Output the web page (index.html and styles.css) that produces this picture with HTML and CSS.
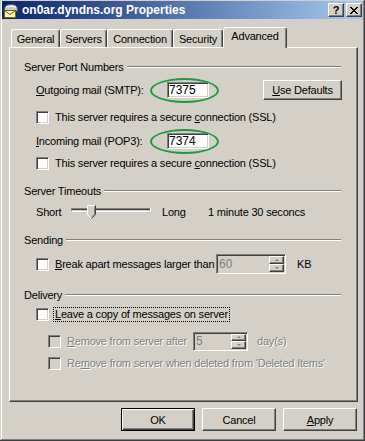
FILE: index.html
```html
<!DOCTYPE html>
<html>

<head>
  <link rel="stylesheet" href="styles.css">
</head>

<body>

  <div class="window">

    <!-- caption bar -->
    <div class="titlebar">
      <svg class="app-icon" width="16" height="16" viewBox="0 0 16 16">
        <path d="M1.5 7 Q1.5 2.5 8 2.5 Q14.5 2.5 14.5 7 L14.5 9 L1.5 9 Z" fill="#c8c8c8" stroke="#5a5a5a" />
        <path d="M3 5 Q8 3 13 5" fill="none" stroke="#ffffff" />
        <rect x="1.5" y="8.5" width="11" height="7" fill="#fff6b0" stroke="#7a6410" />
        <path d="M1.5 8.5 L7 12.5 L12.5 8.5" fill="none" stroke="#7a6410" />
      </svg>
      <span class="title">on0ar.dyndns.org Properties</span>
      <div class="caption-buttons">
        <span class="cap-btn help">?</span>
        <span class="cap-btn">
          <svg width="8" height="7" viewBox="0 0 8 7">
            <path d="M0 0 L7 7 M1 0 L8 7 M7 0 L0 7 M8 0 L1 7" stroke="#000" stroke-width="1" />
          </svg>
        </span>
      </div>
    </div>

    <!-- tab strip -->
    <div class="tabs">
      <div class="tab tab-general">General</div>
      <div class="tab tab-servers">Servers</div>
      <div class="tab tab-connection">Connection</div>
      <div class="tab tab-security">Security</div>
      <div class="tab tab-advanced selected">Advanced</div>
    </div>

    <div class="panel">

      <div class="group-title">Server Port Numbers<span class="rule"></span></div>

      <div class="row row-out">
        <span class="port-label"><u>O</u>utgoing mail (SMTP):</span>
        <span class="field">7375<span class="ring"></span></span>
        <span class="btn defaults"><u>U</u>se Defaults</span>
      </div>
      <div class="row row-ssl1">
        <span class="check"></span>
        <span>This server requires a secure <u>c</u>onnection (SSL)</span>
      </div>

      <div class="row row-in">
        <span class="port-label"><u>I</u>ncoming mail (POP3):</span>
        <span class="field">7374<span class="ring"></span></span>
      </div>
      <div class="row row-ssl2">
        <span class="check"></span>
        <span>This server requires a secure <u>c</u>onnection (SSL)</span>
      </div>

      <div class="group-title gap">Server Timeouts<span class="rule"></span></div>

      <div class="row row-slider">
        <span class="short">Short</span>
        <svg class="slider" width="80" height="20" viewBox="0 0 80 20">
          <line x1="1" y1="6.5" x2="79" y2="6.5" stroke="#808080" />
          <line x1="1" y1="7.5" x2="79" y2="7.5" stroke="#404040" />
          <line x1="1" y1="8.5" x2="79" y2="8.5" stroke="#d4d0c8" />
          <line x1="1" y1="9.5" x2="79" y2="9.5" stroke="#ffffff" />
          <line x1="79.5" y1="6" x2="79.5" y2="10" stroke="#ffffff" />
          <line x1="0.5" y1="6" x2="0.5" y2="9" stroke="#808080" />
          <path d="M16.5 3.5 L24.5 3.5 L24.5 12.5 L20.5 16.5 L16.5 12.5 Z" fill="#d4d0c8" />
          <path d="M16.5 12.5 L16.5 3.5 L24 3.5" fill="none" stroke="#ffffff" />
          <path d="M24.5 3.5 L24.5 12.5 L20.5 16.5" fill="none" stroke="#404040" />
          <path d="M23.5 4.5 L23.5 12 L20.5 15" fill="none" stroke="#808080" />
          <path d="M16.5 12.5 L20 16" fill="none" stroke="#ffffff" />
        </svg>
        <span class="long">Long</span>
        <span>1 minute 30 seconcs</span>
      </div>

      <div class="group-title sending">Sending<span class="rule"></span></div>

      <div class="row row-break">
        <span class="check"></span>
        <span class="break-label"><u>B</u>reak apart messages larger than</span>
        <span class="spin spin-kb">60
          <span class="spin-btns"><span class="spin-btn"><i class="up"></i></span><span class="spin-btn"><i class="down"></i></span></span>
        </span>
        <span class="unit-kb">KB</span>
      </div>

      <div class="group-title gap">Delivery<span class="rule"></span></div>

      <div class="row row-leave">
        <span class="check leave-check"></span>
        <span class="focus"><u>L</u>eave a copy of messages on server</span>
      </div>
      <div class="row row-after sub">
        <span class="check disabled"></span>
        <span class="dim after-label"><u>R</u>emove from server after</span>
        <span class="spin spin-days">5
          <span class="spin-btns"><span class="spin-btn"><i class="up"></i></span><span class="spin-btn"><i class="down"></i></span></span>
        </span>
        <span class="dim unit-days">day(s)</span>
      </div>
      <div class="row row-deleted sub">
        <span class="check disabled"></span>
        <span class="dim">Re<u>m</u>ove from server when deleted from 'Deleted Items'</span>
      </div>

    </div>

    <div class="dialog-buttons">
      <span class="btn default">OK</span>
      <span class="btn">Cancel</span>
      <span class="btn"><u>A</u>pply</span>
    </div>

  </div>

</body>

</html>
```

FILE: styles.css
```css
body {
  margin: 0;
  font: 11px "Liberation Sans", Arial, sans-serif;
  letter-spacing: -0.2px;
  color: #000;
}

.window {
  width: 365px;
  height: 441px;
  box-sizing: border-box;
  padding: 1px 2px 2px 2px;
  background: #d4d0c8;
  box-shadow: inset -1px -1px #404040, inset 1px 1px #d4d0c8, inset -2px -2px #808080, inset 2px 2px #fff;
}

/* caption */
.titlebar {
  display: flex;
  align-items: center;
  height: 18px;
  background: linear-gradient(to right, #0a246a, #a6caf0);
  color: #fff;
  font-weight: bold;
  font-size: 12px;
  letter-spacing: 0;
}

.app-icon {
  margin-left: 1px;
  margin-right: 3px;
  flex: none;
}

.caption-buttons {
  margin-left: auto;
  display: flex;
  gap: 2px;
  margin-right: 1px;
}

.cap-btn {
  width: 16px;
  height: 14px;
  box-sizing: border-box;
  display: flex;
  align-items: center;
  justify-content: center;
  background: #d4d0c8;
  border: 1px solid;
  border-color: #fff #404040 #404040 #fff;
  box-shadow: inset -1px -1px #808080;
  color: #000;
  font-size: 11px;
  font-weight: bold;
  line-height: 12px;
}

/* tabs */
.tabs {
  display: flex;
  align-items: flex-end;
  height: 20px;
  margin-top: 8px;
  margin-left: 9px;
}

.tab {
  height: 18px;
  box-sizing: border-box;
  border: 1px solid;
  border-color: #fff #404040 transparent #fff;
  border-bottom: none;
  border-radius: 3px 3px 0 0;
  box-shadow: inset -1px 0 #808080;
  text-align: center;
  line-height: 18px;
}

.tab-general { width: 49px; }
.tab-servers { width: 47px; }
.tab-connection { width: 66px; }
.tab-security { width: 50px; }
.tab-advanced { width: 64px; }

.tab.selected {
  position: relative;
  z-index: 1;
  height: 21px;
  margin-bottom: -1px;
  background: #d4d0c8;
  line-height: 17px;
}

/* page */
.panel {
  width: 349px;
  height: 355px;
  margin-left: 7px;
  box-sizing: border-box;
  border: 1px solid;
  border-color: #fff #404040 #404040 #fff;
  box-shadow: inset -1px -1px #808080;
  padding: 12px 16px 0 14px;
}

.group-title {
  display: flex;
  align-items: center;
  height: 14px;
  white-space: nowrap;
}

.group-title.gap { margin-top: 13px; }
.group-title.sending { margin-top: 11px; }

.rule {
  flex: 1;
  height: 0;
  margin-left: 3px;
  border-top: 1px solid #808080;
  border-bottom: 1px solid #fff;
}

.row {
  display: flex;
  align-items: center;
  padding-left: 12px;
  white-space: nowrap;
}

.row.sub { padding-left: 24px; }

.row-out { height: 22px; margin-top: 5px; }
.row-ssl1 { height: 16px; margin-top: 8px; }
.row-in { height: 22px; margin-top: 5px; }
.row-ssl2 { height: 16px; margin-top: 3px; }
.row-slider { height: 20px; margin-top: 4px; }
.row-break { height: 22px; margin-top: 6px; }
.row-leave { height: 16px; margin-top: 4px; }
.row-after { height: 20px; margin-top: 9px; }
.row-deleted { height: 16px; margin-top: 4px; }

.port-label { width: 131px; }

.field {
  position: relative;
  width: 42px;
  height: 16px;
  box-sizing: border-box;
  padding-left: 1px;
  background: #fff;
  border: 1px solid;
  border-color: #808080 #fff #fff #808080;
  box-shadow: inset 1px 1px #404040, inset -1px -1px #d4d0c8;
  font-size: 12px;
  line-height: 14px;
  letter-spacing: 0;
}

/* green annotation ring drawn over the screenshot */
.ring {
  position: absolute;
  left: -18px;
  top: -5px;
  width: 69px;
  height: 25px;
  box-sizing: border-box;
  border: 2px solid #1d9a3e;
  border-radius: 50%;
}

.check {
  flex: none;
  width: 13px;
  height: 13px;
  box-sizing: border-box;
  margin-right: 6px;
  background: #fff;
  border: 1px solid;
  border-color: #808080 #fff #fff #808080;
  box-shadow: inset 1px 1px #404040, inset -1px -1px #d4d0c8;
}

.check.disabled { background: #d4d0c8; }
.check.leave-check { margin-right: 4px; }

.focus {
  padding: 0 1px;
  line-height: 13px;
  border: 1px dotted #000;
}

.dim {
  color: #808080;
  text-shadow: 1px 1px 0 #fff;
}

.btn {
  display: flex;
  align-items: center;
  justify-content: center;
  width: 74px;
  height: 23px;
  box-sizing: border-box;
  border: 1px solid;
  border-color: #fff #404040 #404040 #fff;
  box-shadow: inset -1px -1px #808080;
}

.btn.defaults {
  width: 79px;
  height: 20px;
  margin-left: auto;
  margin-right: -1px;
}

.btn.default {
  border-color: #000;
  box-shadow: inset 1px 1px #fff, inset -1px -1px #404040, inset -2px -2px #808080;
}

/* slider row */
.short { width: 35px; }
.slider { flex: none; }
.long { width: 46px; margin-left: 11px; }

/* spinners */
.break-label { width: 161px; }
.after-label { width: 126px; }

.spin {
  display: flex;
  align-items: center;
  height: 20px;
  box-sizing: border-box;
  padding-left: 2px;
  background: #d4d0c8;
  border: 1px solid;
  border-color: #808080 #fff #fff #808080;
  box-shadow: inset 1px 1px #404040, inset -1px -1px #d4d0c8;
  color: #808080;
  font-size: 12px;
  letter-spacing: 0;
}

.spin-kb { width: 70px; }
.spin-days { width: 55px; height: 19px; }

.spin-btns {
  margin-left: auto;
  align-self: stretch;
  display: flex;
  flex-direction: column;
  width: 15px;
  padding: 1px 1px 1px 0;
}

.spin-btn {
  flex: 1;
  display: flex;
  align-items: center;
  justify-content: center;
  box-sizing: border-box;
  border: 1px solid;
  border-color: #fff #404040 #404040 #fff;
  box-shadow: inset -1px -1px #808080;
}

.spin-btn i {
  width: 0;
  height: 0;
  border-left: 2px solid transparent;
  border-right: 2px solid transparent;
}

.spin-btn .up { border-bottom: 2px solid #808080; }
.spin-btn .down { border-top: 2px solid #808080; }

.unit-kb { margin-left: 11px; }
.unit-days { margin-left: 9px; }

/* bottom buttons */
.dialog-buttons {
  display: flex;
  justify-content: flex-end;
  gap: 7px;
  margin-top: 6px;
  padding-right: 6px;
}
```
